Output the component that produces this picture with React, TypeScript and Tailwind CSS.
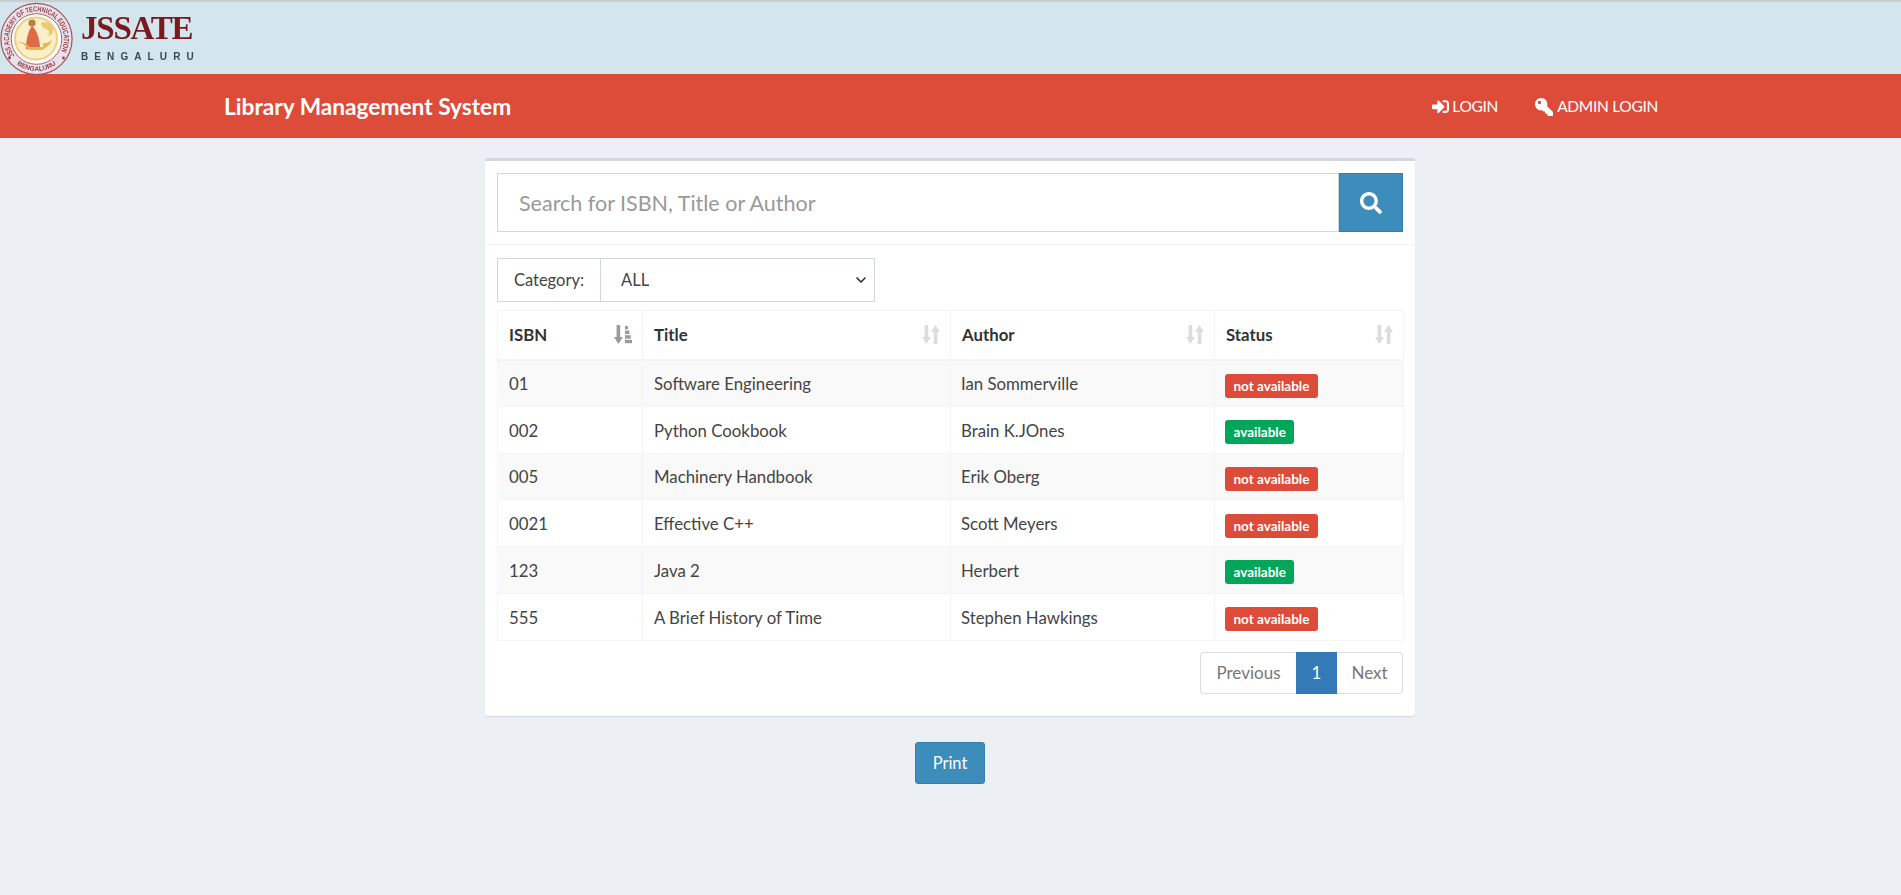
import React from "react";
import { FaSignInAlt, FaKey, FaSearch } from "react-icons/fa";
import { ChevronDown } from "lucide-react";

function SortIcon({ active }: { active?: boolean }) {
  if (active) {
    return (
      <svg width="18" height="19" viewBox="0 0 18 19" className="text-[#9a9a9a]" fill="currentColor">
        <path d="M2.6 0h3.6v12h2.7L4.4 19 0 12h2.6z" />
        <rect x="11" y="1" width="3" height="3.4" />
        <rect x="11" y="5.6" width="4.4" height="3.4" />
        <rect x="11" y="10.2" width="5.8" height="3.4" />
        <rect x="11" y="14.8" width="7" height="3.4" />
      </svg>
    );
  }
  return (
    <svg width="18" height="19" viewBox="0 0 18 19" className="text-[#dcdcdc]" fill="currentColor">
      <path d="M2.6 0h3.6v12h2.7L4.4 19 0 12h2.6z" />
      <path d="M13.6 0L18 7h-2.6v12h-3.6V7H9.1z" />
    </svg>
  );
}

function Seal() {
  return (
    <svg width="73" height="73" viewBox="0 0 73 73" className="shrink-0 blur-[0.4px]">
      <defs>
        <path id="sealTop" d="M14.5 53.5A27.5 27.5 0 1 1 58.5 53.5" />
        <path id="sealBottom" d="M16.8 62.2A32 32 0 0 0 56.2 62.2" />
      </defs>
      <circle cx="36.5" cy="37" r="35.6" fill="#e6e2ea" stroke="#a8525c" strokeWidth="1.2" />
      <circle cx="36.5" cy="37" r="25.3" fill="#fffdf8" stroke="#a8525c" strokeWidth="0.9" />
      <text fontSize="7.4" fontWeight="700" fill="#9b3a48" fontFamily="'Liberation Sans Narrow', 'Liberation Sans', sans-serif">
        <textPath href="#sealTop" textLength="116" lengthAdjust="spacingAndGlyphs">JSS ACADEMY OF TECHNICAL EDUCATION</textPath>
      </text>
      <text fontSize="6.6" fontWeight="700" fill="#9b3a48" textAnchor="middle" fontFamily="'Liberation Sans', sans-serif">
        <textPath href="#sealBottom" startOffset="50%">BENGALURU</textPath>
      </text>
      <circle cx="36" cy="36.5" r="21" fill="#fbeec8" stroke="#ecd088" strokeWidth="2" />
      <path d="M26 47c0-9 2-18 6-23 5 4 8 14 8 23z" fill="#dd6b45" />
      <circle cx="32" cy="21" r="3.6" fill="#b5813f" />
      <path d="M17 40c5 0 9 4 12 8l13 0c4-2 9-6 10-10-3 2-6 4-9 3l0 4H30c-4-3-8-6-13-5z" fill="#e2b84f" />
      <path d="M41 21c5-2 11 0 12 5s-1 7-5 8c2-3 1-6-2-7s-5-3-5-6z" fill="#ecca72" />
      <circle cx="9.5" cy="56" r="1.4" fill="#9b3a48" />
      <circle cx="63.5" cy="56" r="1.4" fill="#9b3a48" />
    </svg>
  );
}

const rows = [
  ["01", "Software Engineering", "Ian Sommerville", false],
  ["002", "Python Cookbook", "Brain K.JOnes", true],
  ["005", "Machinery Handbook", "Erik Oberg", false],
  ["0021", "Effective C++", "Scott Meyers", false],
  ["123", "Java 2", "Herbert", true],
  ["555", "A Brief History of Time", "Stephen Hawkings", false],
] as const;

const heads = [
  { label: "ISBN", w: "w-[145px]", active: true },
  { label: "Title", w: "w-[308px]" },
  { label: "Author", w: "w-[264px]" },
  { label: "Status", w: "w-[189px]" },
];

export default function App() {
  return (
    <div className="min-h-[895px] bg-[#ecf0f5] font-['Lato','Noto_Sans',sans-serif] text-[#444]">
      <header className="h-[74px] bg-[#d3e6ee] border-t-2 border-[#c9cdd0] flex items-center">
        <Seal />
        <div className="ml-[8px] -mt-[3px] flex flex-col blur-[0.3px]">
          <span className="font-['Liberation_Serif',serif] font-bold text-[33px] leading-[34px] text-[#7b1a1e] tracking-[-1.2px]">JSSATE</span>
          <span className="mt-[6px] font-['Liberation_Sans',sans-serif] font-bold text-[10px] leading-[12px] text-[#3d4850] tracking-[6.1px]">BENGALURU</span>
        </div>
      </header>

      <nav className="h-[64px] bg-[#dd4b39] flex items-center pl-[224px] pr-[243px] text-white">
        <span className="font-bold text-[22.7px] leading-[26px] mt-[2px]">Library Management System</span>
        <div className="ml-auto flex items-center text-[15.5px] tracking-[-0.3px] gap-[37px] mt-[1px]">
          <span className="flex items-center gap-[3px]"><FaSignInAlt className="text-[17px]" />LOGIN</span>
          <span className="flex items-center gap-[4px]"><FaKey className="text-[18px] -scale-x-100" />ADMIN LOGIN</span>
        </div>
      </nav>

      <main className="flex flex-col items-center pt-[20px] pr-[1px]">
        <section className="w-[930px] h-[558px] bg-white border-t-[3px] border-[#d2d6de] rounded-[3px] shadow-[0_1px_1px_rgba(0,0,0,0.1)]">
          <div className="h-[84px] px-[12px] pt-[12px] border-b border-[#f4f4f4]">
            <div className="flex h-[59px]">
              <div className="flex-1 border border-[#d2d6de] flex items-center pl-[21px] pt-[1px] text-[21.5px] text-[#999]">Search for ISBN, Title or Author</div>
              <button className="w-[64px] bg-[#3c8dbc] border border-[#367fa9] flex items-center justify-center text-white text-[22px]"><FaSearch /></button>
            </div>
          </div>

          <div className="px-[12px] pt-[13px]">
            <div className="flex h-[44px] w-[378px] border border-[#d2d6de] text-[16.5px]">
              <div className="w-[103px] border-r border-[#d2d6de] flex items-center justify-center">Category:</div>
              <div className="flex-1 flex items-center justify-between pl-[20px] pr-[5px]">
                <span>ALL</span>
                <ChevronDown size={16} strokeWidth={2.5} className="text-[#333]" />
              </div>
            </div>

            <table className="mt-[8px] w-[906px] table-fixed border-collapse text-[16.8px]">
              <thead>
                <tr className="h-[49px]">
                  {heads.map((h) => (
                    <th key={h.label} className={`${h.w} border border-[#f4f4f4] border-b-2 pl-[11px] pr-[10px] text-left font-bold text-[#333]`}>
                      <div className="flex items-center justify-between">
                        <span>{h.label}</span>
                        <SortIcon active={h.active} />
                      </div>
                    </th>
                  ))}
                </tr>
              </thead>
              <tbody>
                {rows.map(([isbn, title, author, ok], i) => (
                  <tr key={isbn} className={`h-[46.75px] ${i % 2 === 0 ? "bg-[#f9f9f9]" : "bg-white"}`}>
                    <td className="border border-[#f4f4f4] pl-[11px] pt-[1px]">{isbn}</td>
                    <td className="border border-[#f4f4f4] pl-[11px] pt-[1px]">{title}</td>
                    <td className="border border-[#f4f4f4] pl-[10px] pt-[1px]">{author}</td>
                    <td className="border border-[#f4f4f4] pl-[10px]">
                      <span className={`inline-block h-[24px] rounded-[3px] px-[8.5px] text-[13.5px] leading-[24px] font-bold text-white mt-[5px] ${ok ? "bg-[#00a65a]" : "bg-[#dd4b39]"}`}>
                        {ok ? "available" : "not available"}
                      </span>
                    </td>
                  </tr>
                ))}
              </tbody>
            </table>

            <div className="mt-[11px] flex justify-end">
              <div className="flex h-[42px] text-[17px] text-[#777]">
                <span className="w-[96px] border border-[#ddd] border-r-0 rounded-l-[4px] flex items-center justify-center">Previous</span>
                <span className="w-[41px] bg-[#337ab7] text-white flex items-center justify-center">1</span>
                <span className="w-[66px] border border-[#ddd] border-l-0 rounded-r-[4px] flex items-center justify-center">Next</span>
              </div>
            </div>
          </div>
        </section>

        <button className="mt-[26px] w-[70px] h-[42px] rounded-[3px] bg-[#3c8dbc] border border-[#367fa9] text-white text-[16.5px]">Print</button>
      </main>
    </div>
  );
}
